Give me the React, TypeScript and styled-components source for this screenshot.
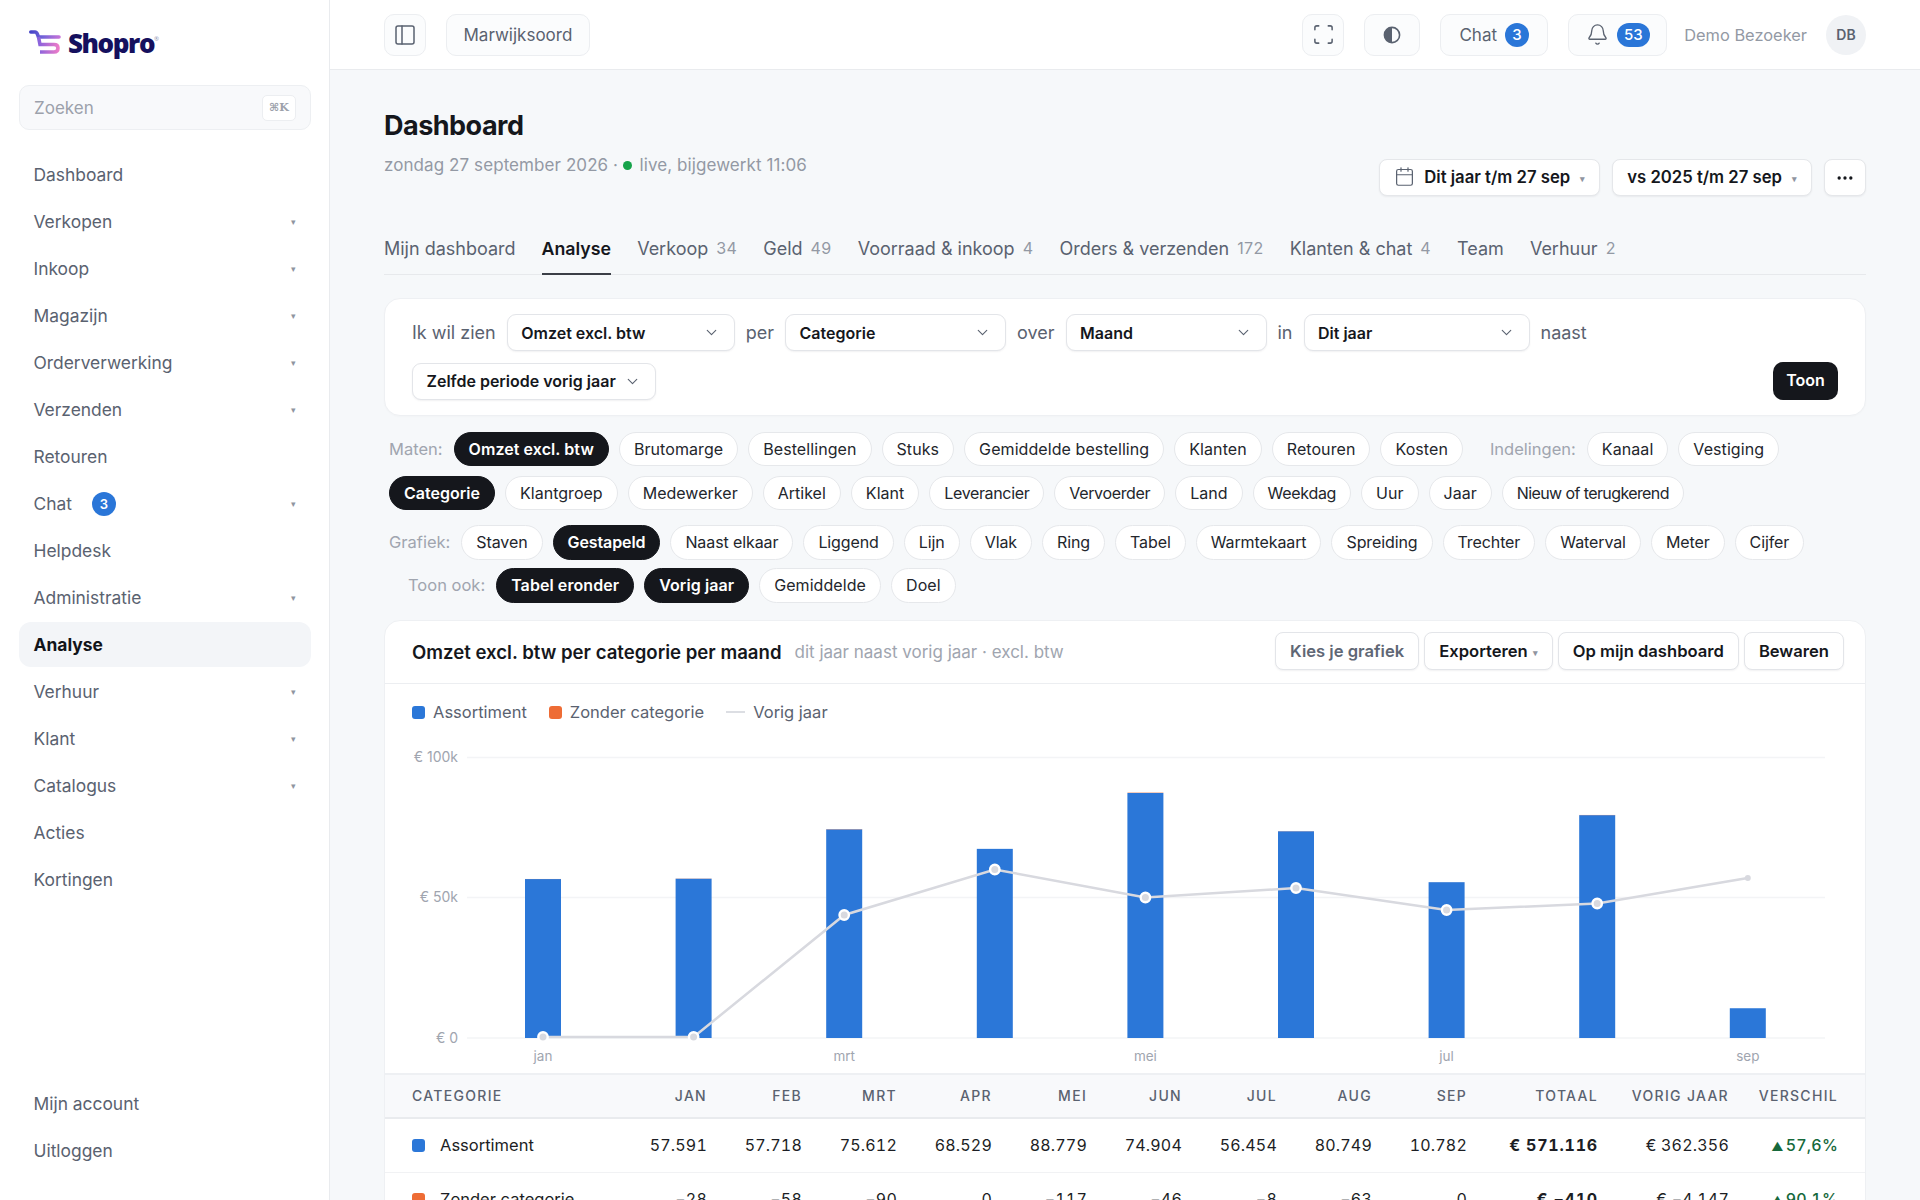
import React from 'react'
import styled, { createGlobalStyle } from 'styled-components'
import { Bell, Calendar, ChevronDown, Ellipsis, PanelLeft, Scan } from 'lucide-react'

const GlobalStyle = createGlobalStyle`
  html, body {
    margin: 0;
    height: 100%;
    overflow: hidden;
    background: #f6f8fa;
    font-family: Inter, "Liberation Sans", sans-serif;
    color: #15171c;
    -webkit-font-smoothing: antialiased;
  }
  * { box-sizing: border-box; }
`

const Shell = styled.div`
  display: flex;
  height: 1200px;
  overflow: hidden;
`

const Sidebar = styled.aside`
  width: 330px;
  flex: none;
  background: #fff;
  border-right: 1px solid #e9ebee;
  padding: 28px 18px 27px 19px;
  display: flex;
  flex-direction: column;
`

const LogoRow = styled.div`
  display: flex;
  align-items: center;
  gap: 7px;
  height: 30px;
  padding-left: 10px;
`

const LogoText = styled.span`
  font-family: "Open Sans", sans-serif;
  font-weight: 800;
  font-size: 26px;
  letter-spacing: -1.4px;
  color: #15105e;
  position: relative;

  &::after {
    content: '®';
    position: absolute;
    font-size: 6px;
    font-weight: 400;
    letter-spacing: 0;
    color: #8d8fb0;
    top: 10px;
    right: -5px;
  }
`

const Search = styled.div`
  margin-top: 27px;
  height: 45px;
  border: 1px solid #edeff2;
  border-radius: 10px;
  background: #f8f9fb;
  display: flex;
  align-items: center;
  justify-content: space-between;
  padding: 0 14px;
  font-size: 17px;
  color: #9ca1ab;
`

const Kbd = styled.span`
  width: 34px;
  height: 26px;
  border: 1px solid #eceef1;
  border-radius: 5px;
  background: #fff;
  display: flex;
  align-items: center;
  justify-content: center;
  font-family: "DejaVu Serif", serif;
  font-weight: 700;
  font-size: 11px;
  color: #9ca1ab;
`

const NavList = styled.nav`
  margin-top: 22.5px;
  display: flex;
  flex-direction: column;
  gap: 2px;
`

const BottomNav = styled(NavList)`
  margin-top: auto;
`

const NavItem = styled.div<{ $active?: boolean }>`
  height: 44.94px;
  padding: 0 15px 0 14.5px;
  border-radius: 12px;
  display: flex;
  align-items: center;
  font-size: 17.4px;
  font-weight: ${(p) => (p.$active ? 700 : 400)};
  color: ${(p) => (p.$active ? '#121419' : '#5a6270')};
  background: ${(p) => (p.$active ? '#f3f5f8' : 'transparent')};
`

const NavCaret = styled.span`
  margin-left: auto;
  font-size: 9px;
  color: #8f95a0;
`

const NavBadge = styled.span`
  width: 24px;
  height: 24px;
  margin-left: 20px;
  border-radius: 50%;
  background: #2a76d8;
  color: #fff;
  font-size: 13px;
  font-weight: 600;
  display: flex;
  align-items: center;
  justify-content: center;
`

const Main = styled.main`
  flex: 1;
  min-width: 0;
  display: flex;
  flex-direction: column;
`

const Topbar = styled.header`
  height: 70px;
  flex: none;
  background: #fff;
  border-bottom: 1px solid #e9ebee;
  padding: 0 54px;
  display: flex;
  align-items: center;
  gap: 20px;
`

const TopButton = styled.div<{ $width?: number }>`
  height: 42px;
  ${(p) => (p.$width ? `width: ${p.$width}px;` : 'padding: 0 16.5px;')}
  border: 1px solid #eceef1;
  border-radius: 10px;
  background: #fbfcfd;
  display: flex;
  align-items: center;
  justify-content: center;
  gap: 8px;
  font-size: 17px;
  color: #5a6270;
`

const TopSpacer = styled.div`
  flex: 1;
`

const CountBadge = styled.span<{ $wide?: boolean }>`
  height: 24px;
  min-width: 24px;
  padding: 0 ${(p) => (p.$wide ? 7 : 0)}px;
  border-radius: 12px;
  background: #2a76d8;
  color: #fff;
  font-size: 15px;
  font-weight: 500;
  display: flex;
  align-items: center;
  justify-content: center;
`

const UserName = styled.span`
  font-size: 16.4px;
  color: #9399a4;
  margin-left: -3px;
`

const Avatar = styled.div`
  width: 40px;
  height: 40px;
  margin-left: -1px;
  border-radius: 50%;
  background: #f0f2f5;
  display: flex;
  align-items: center;
  justify-content: center;
  font-size: 14px;
  font-weight: 600;
  color: #5a6270;
`

const Content = styled.div`
  padding: 38px 54px 0;
  flex: 1;
`

const Heading = styled.div`
  display: flex;
  justify-content: space-between;
  align-items: flex-end;
  height: 88px;
`

const HeadingText = styled.div`
  align-self: flex-start;
`

const Title = styled.h1`
  margin: 0;
  font-size: 27px;
  line-height: 36px;
  font-weight: 700;
  letter-spacing: -0.5px;
  color: #15171c;
`

const Subtitle = styled.div`
  margin-top: 9px;
  font-size: 17px;
  line-height: 24px;
  letter-spacing: 0.08px;
  color: #9399a4;
  display: flex;
  align-items: center;
  gap: 4px;
`

const LiveDot = styled.span`
  width: 9px;
  height: 9px;
  margin: 1px 3.5px 0 1px;
  border-radius: 50%;
  background: #16a34a;
`

const HeadActions = styled.div`
  display: flex;
  gap: 12px;
`

const PeriodButton = styled.div<{ $square?: boolean }>`
  height: 37px;
  padding: ${(p) => (p.$square ? '0' : '0 14px 2px 14px')};
  ${(p) => p.$square && 'width: 42px; justify-content: center;'}
  background: #fff;
  border: 1px solid #e5e7ea;
  border-radius: 8px;
  box-shadow: 0 1px 2px rgba(20, 24, 32, 0.06);
  display: flex;
  align-items: center;
  gap: 9px;
  font-size: 16.7px;
  font-weight: 600;
  color: #15171c;
`

const SmallCaret = styled.span`
  font-size: 9px;
  color: #8f95a0;
  margin: 3px 0 0 1px;
`

const Tabs = styled.div`
  margin-top: 29px;
  height: 50px;
  border-bottom: 1px solid #e7e9ec;
  display: flex;
  gap: 26px;
`

const Tab = styled.div<{ $active?: boolean }>`
  height: 50px;
  display: flex;
  align-items: center;
  gap: 8px;
  padding-bottom: 2px;
  font-size: ${(p) => (p.$active ? 17.8 : 18)}px;
  font-weight: ${(p) => (p.$active ? 600 : 400)};
  color: ${(p) => (p.$active ? '#15171c' : '#5a6270')};
  border-bottom: 2px solid ${(p) => (p.$active ? '#3b3f47' : 'transparent')};
`

const TabCount = styled.span`
  font-size: 16px;
  letter-spacing: 0.4px;
  color: #9399a4;
`

const FilterCard = styled.section`
  margin-top: 23px;
  height: 118px;
  background: #fff;
  border: 1px solid #eef0f3;
  border-radius: 16px;
  box-shadow: 0 1px 2px rgba(20, 24, 32, 0.02);
  padding: 15px 27px 0;
  display: flex;
  flex-direction: column;
  gap: 11px;
`

const FilterRow = styled.div`
  display: flex;
  align-items: center;
  gap: 11px;
`

const Word = styled.span`
  font-size: 18px;
  color: #5a6270;
`

const Select = styled.div<{ $width?: number }>`
  height: 37px;
  ${(p) => p.$width && `width: ${p.$width}px;`}
  padding: 0 14px 0 13.5px;
  background: #fff;
  border: 1px solid #e3e5e9;
  border-radius: 9px;
  box-shadow: 0 1px 2px rgba(20, 24, 32, 0.06);
  display: flex;
  align-items: center;
  justify-content: space-between;
  gap: 8px;
  font-size: 16px;
  font-weight: 600;
  color: #15171c;
  white-space: nowrap;
`

const ShowButton = styled.div`
  margin-left: auto;
  height: 38px;
  width: 65px;
  border-radius: 10px;
  background: #15171c;
  color: #fff;
  display: flex;
  align-items: center;
  justify-content: center;
  font-size: 16px;
  font-weight: 600;
  padding-bottom: 2px;
`

const PillGroup = styled.div<{ $top: number; $gap: number }>`
  margin-top: ${(p) => p.$top}px;
  padding-left: 5px;
  display: flex;
  flex-direction: column;
  gap: ${(p) => p.$gap}px;
`

const PillLine = styled.div<{ $spacing?: number }>`
  display: flex;
  align-items: center;
  gap: 10px;
  letter-spacing: ${(p) => p.$spacing || 0}px;
`

const PillLabel = styled.span<{ $indent?: number }>`
  font-size: 16.5px;
  letter-spacing: 0;
  color: #a0a5af;
  margin-right: 1px;
  margin-left: ${(p) => p.$indent || 0}px;
`

const Pill = styled.span<{ $on?: boolean; $spacing?: number }>`
  height: 34.5px;
  padding: 0 14px;
  border-radius: 18px;
  border: 1px solid ${(p) => (p.$on ? '#15171c' : '#e6e8eb')};
  background: ${(p) => (p.$on ? '#15171c' : '#fff')};
  color: ${(p) => (p.$on ? '#fff' : '#23262c')};
  font-size: 16px;
  font-weight: ${(p) => (p.$on ? 600 : 400)};
  display: flex;
  align-items: center;
  white-space: nowrap;
  ${(p) => p.$spacing !== undefined && `letter-spacing: ${p.$spacing}px;`}
`

const ChartCard = styled.section`
  margin-top: 17.2px;
  background: #fff;
  border: 1px solid #eef0f3;
  border-radius: 16px 16px 0 0;
`

const ChartHead = styled.div`
  height: 63px;
  padding: 1px 21px 0 27px;
  border-bottom: 1px solid #eceef1;
  display: flex;
  align-items: center;
  gap: 13px;
`

const ChartTitle = styled.span`
  font-size: 18.6px;
  font-weight: 600;
  color: #15171c;
`

const ChartNote = styled.span`
  font-size: 17px;
  color: #a0a5af;
`

const ChartActions = styled.div`
  margin-left: auto;
  display: flex;
  gap: 5px;
`

const ActionButton = styled.div<{ $muted?: boolean }>`
  height: 38px;
  padding: 0 14px;
  margin-top: -2px;
  background: #fff;
  border: 1px solid #e3e5e9;
  border-radius: 8px;
  box-shadow: 0 1px 2px rgba(20, 24, 32, 0.06);
  display: flex;
  align-items: center;
  gap: 4px;
  font-size: 16.6px;
  font-weight: 600;
  color: ${(p) => (p.$muted ? '#5f6775' : '#15171c')};
  white-space: nowrap;
`

const Legend = styled.div`
  height: 55px;
  padding: 2px 27px 0;
  display: flex;
  align-items: center;
  gap: 22px;
  font-size: 16.5px;
  color: #5a6270;
`

const LegendItem = styled.span`
  display: flex;
  align-items: center;
  gap: 8px;
`

const Swatch = styled.span<{ $color: string }>`
  width: 13px;
  height: 13px;
  border-radius: 3px;
  background: ${(p) => p.$color};
  flex: none;
`

const LegendLine = styled.span`
  width: 19px;
  height: 2px;
  background: #dcdee3;
`

const ChartSvg = styled.svg`
  display: block;
  width: 1480px;
  height: 334px;
  font-family: Inter, sans-serif;
`

const TableRow = styled.div<{ $head?: boolean }>`
  display: grid;
  grid-template-columns: 200px repeat(9, 95px) 131px 131px 109px;
  padding: 0 27px;
  align-items: center;
  height: ${(p) => (p.$head ? 46 : 54)}px;
  background: ${(p) => (p.$head ? '#f8f9fb' : '#fff')};
  border-top: ${(p) => (p.$head ? '2px solid #eef0f3' : 'none')};
  border-bottom: ${(p) => (p.$head ? '2px solid #e9ebee' : '1px solid #f1f2f4')};
`

const HeadCell = styled.div<{ $left?: boolean }>`
  text-align: ${(p) => (p.$left ? 'left' : 'right')};
  font-size: 14px;
  font-weight: 500;
  letter-spacing: 1.3px;
  color: #5a6270;
  white-space: nowrap;
`

const NameCell = styled.div`
  display: flex;
  align-items: center;
  gap: 15px;
  font-size: 16.5px;
  color: #1c1e24;
`

const NumCell = styled.div<{ $strong?: boolean }>`
  text-align: right;
  font-size: 16px;
  font-weight: ${(p) => (p.$strong ? 700 : 400)};
  letter-spacing: ${(p) => (p.$strong ? 0.8 : 0.2)}px;
  color: #1c1e24;
  font-variant-numeric: tabular-nums;
  white-space: nowrap;
`

const DeltaCell = styled(NumCell)`
  color: #16693c;
  font-weight: 500;
`

const DeltaArrow = styled.span`
  font-size: 12px;
  margin-right: 2px;
`

const navTop = [
  { label: 'Dashboard' },
  { label: 'Verkopen', caret: true },
  { label: 'Inkoop', caret: true },
  { label: 'Magazijn', caret: true },
  { label: 'Orderverwerking', caret: true },
  { label: 'Verzenden', caret: true },
  { label: 'Retouren' },
  { label: 'Chat', caret: true, badge: 3 },
  { label: 'Helpdesk' },
  { label: 'Administratie', caret: true },
  { label: 'Analyse', active: true },
  { label: 'Verhuur', caret: true },
  { label: 'Klant', caret: true },
  { label: 'Catalogus', caret: true },
  { label: 'Acties' },
  { label: 'Kortingen' },
]

const tabs = [
  { label: 'Mijn dashboard' },
  { label: 'Analyse', active: true },
  { label: 'Verkoop', count: 34 },
  { label: 'Geld', count: 49 },
  { label: 'Voorraad & inkoop', count: 4 },
  { label: 'Orders & verzenden', count: 172 },
  { label: 'Klanten & chat', count: 4 },
  { label: 'Team' },
  { label: 'Verhuur', count: 2 },
]

// a few labels run narrower in the reference font
const pillSpacing: Record<string, number> = {
  Leverancier: -0.35,
  Vervoerder: -0.35,
  Weekdag: -0.3,
  'Nieuw of terugkerend': -0.6,
}

const months = ['JAN', 'FEB', 'MRT', 'APR', 'MEI', 'JUN', 'JUL', 'AUG', 'SEP']
const assortiment = [57591, 57718, 75612, 68529, 88779, 74904, 56454, 80749, 10782]
const zonder = [28, 58, 90, 0, 117, 46, 8, 63, 0]
const prevYear = [1037, 1037, 915, 869.5, 897.5, 888, 910, 903.5, 878]
const fmt = (n: number) => n.toLocaleString('de-DE')

// chart coords are page px minus this offset
const OX = 385
const OY = 739
const barX = (i: number) => 543 + i * 150.6 - OX

const PillRow = ({ items, on = [] }: { items: string[]; on?: string[] }) => (
  <>
    {items.map((t) => (
      <Pill key={t} $on={on.includes(t)} $spacing={pillSpacing[t]}>
        {t}
      </Pill>
    ))}
  </>
)

const Chart = () => {
  const line = prevYear.map((y, i) => `${barX(i)},${y - OY}`).join(' ')
  const baseY = 1038 - OY
  return (
    <ChartSvg viewBox="0 0 1480 334">
      {[757.5, 897.5, 1038].map((y) => (
        <line key={y} x1={82} x2={1440} y1={y - OY} y2={y - OY} stroke="#f3f4f6" strokeWidth="1.5" />
      ))}
      {[
        ['€ 100k', 757.5],
        ['€ 50k', 897.5],
        ['€ 0', 1038],
      ].map(([t, y]) => (
        <text key={t} x={73} y={Number(y) - OY + 4.5} textAnchor="end" fontSize="14" fill="#a0a5af">
          {t}
        </text>
      ))}
      {assortiment.map((v, i) => {
        const h = v * 0.00276
        const z = zonder[i] * 0.00276
        return (
          <g key={i}>
            <rect x={barX(i) - 18} y={baseY - h} width={36} height={h} fill="#2b77d8" />
            <rect x={barX(i) - 18} y={baseY - h - z} width={36} height={z} fill="#ee6c35" />
          </g>
        )
      })}
      <polyline points={line} fill="none" stroke="#d8d9df" strokeWidth="2.5" />
      {prevYear.map((y, i) =>
        i === 8 ? (
          <circle key={i} cx={barX(i)} cy={y - OY} r="3" fill="#d8d9df" />
        ) : (
          <circle key={i} cx={barX(i)} cy={y - OY} r="4.7" fill="#d8d9df" stroke="#fff" strokeWidth="2.4" />
        ),
      )}
      {[
        ['jan', 0],
        ['mrt', 2],
        ['mei', 4],
        ['jul', 6],
        ['sep', 8],
      ].map(([t, i]) => (
        <text key={t} x={barX(Number(i))} y={1061 - OY} textAnchor="middle" fontSize="13.5" fill="#a0a5af">
          {t}
        </text>
      ))}
    </ChartSvg>
  )
}

const LogoMark = () => (
  <svg width="32" height="26" viewBox="0 0 32 26" fill="none">
    <defs>
      <linearGradient id="cartTop" x1="0" y1="0" x2="31" y2="8" gradientUnits="userSpaceOnUse">
        <stop offset="0" stopColor="#3f3fc4" />
        <stop offset="0.45" stopColor="#6f62d8" />
        <stop offset="1" stopColor="#c873d8" />
      </linearGradient>
      <linearGradient id="cartBot" x1="10" y1="18" x2="30" y2="18" gradientUnits="userSpaceOnUse">
        <stop offset="0" stopColor="#8a63dc" />
        <stop offset="1" stopColor="#ee7cc8" />
      </linearGradient>
    </defs>
    <path d="M1.8 2H6C7.5 2 8 3 8.5 4.5L9.5 7H30" stroke="url(#cartTop)" strokeWidth="3.6" strokeLinecap="round" fill="none" />
    <path d="M9.5 7L11 14.5H25C28 14.5 29 16 29 18C29 20.5 27.5 22 25 22H11" stroke="url(#cartBot)" strokeWidth="3.6" fill="none" />
  </svg>
)

const ContrastIcon = () => (
  <svg width="20" height="20" viewBox="0 0 20 20">
    <circle cx="10" cy="10" r="7.6" fill="none" stroke="#5a6270" strokeWidth="1.6" />
    <path d="M10 2.4A7.6 7.6 0 0 0 10 17.6Z" fill="#5a6270" />
  </svg>
)

const App = () => {
  const chevron = <ChevronDown size={17} strokeWidth={1.6} color="#5a6270" />
  return (
    <Shell>
      <GlobalStyle />
      <Sidebar>
        <LogoRow>
          <LogoMark />
          <LogoText>Shopro</LogoText>
        </LogoRow>
        <Search>
          Zoeken
          <Kbd>⌘K</Kbd>
        </Search>
        <NavList>
          {navTop.map((n) => (
            <NavItem key={n.label} $active={n.active}>
              {n.label}
              {n.badge && <NavBadge>{n.badge}</NavBadge>}
              {n.caret && <NavCaret>▾</NavCaret>}
            </NavItem>
          ))}
        </NavList>
        <BottomNav>
          <NavItem>Mijn account</NavItem>
          <NavItem>Uitloggen</NavItem>
        </BottomNav>
      </Sidebar>

      <Main>
        <Topbar>
          <TopButton $width={42}>
            <PanelLeft size={24} strokeWidth={1.5} />
          </TopButton>
          <TopButton>Marwijksoord</TopButton>
          <TopSpacer />
          <TopButton $width={42}>
            <Scan size={23} strokeWidth={1.6} />
          </TopButton>
          <TopButton $width={56}>
            <ContrastIcon />
          </TopButton>
          <TopButton $width={108}>
            Chat <CountBadge>3</CountBadge>
          </TopButton>
          <TopButton $width={99}>
            <Bell size={23} strokeWidth={1.4} />
            <CountBadge $wide>53</CountBadge>
          </TopButton>
          <UserName>Demo Bezoeker</UserName>
          <Avatar>DB</Avatar>
        </Topbar>

        <Content>
          <Heading>
            <HeadingText>
              <Title>Dashboard</Title>
              <Subtitle>
                zondag 27 september 2026 · <LiveDot /> live, bijgewerkt 11:06
              </Subtitle>
            </HeadingText>
            <HeadActions>
              <PeriodButton>
                <Calendar size={21} strokeWidth={1.4} color="#5a6270" />
                Dit jaar t/m 27 sep
                <SmallCaret>▾</SmallCaret>
              </PeriodButton>
              <PeriodButton>
                vs 2025 t/m 27 sep
                <SmallCaret>▾</SmallCaret>
              </PeriodButton>
              <PeriodButton $square>
                <Ellipsis size={20} strokeWidth={2} />
              </PeriodButton>
            </HeadActions>
          </Heading>

          <Tabs>
            {tabs.map((t) => (
              <Tab key={t.label} $active={t.active}>
                {t.label}
                {t.count !== undefined && <TabCount>{t.count}</TabCount>}
              </Tab>
            ))}
          </Tabs>

          <FilterCard>
            <FilterRow>
              <Word>Ik wil zien</Word>
              <Select $width={228}>Omzet excl. btw {chevron}</Select>
              <Word>per</Word>
              <Select $width={221}>Categorie {chevron}</Select>
              <Word>over</Word>
              <Select $width={201}>Maand {chevron}</Select>
              <Word>in</Word>
              <Select $width={226}>Dit jaar {chevron}</Select>
              <Word>naast</Word>
            </FilterRow>
            <FilterRow>
              <Select>Zelfde periode vorig jaar {chevron}</Select>
              <ShowButton>Toon</ShowButton>
            </FilterRow>
          </FilterCard>

          <PillGroup $top={15.8} $gap={9.7}>
            <PillLine $spacing={0.08}>
              <PillLabel>Maten:</PillLabel>
              <PillRow
                items={['Omzet excl. btw', 'Brutomarge', 'Bestellingen', 'Stuks', 'Gemiddelde bestelling', 'Klanten', 'Retouren', 'Kosten']}
                on={['Omzet excl. btw']}
              />
              <PillLabel $indent={17}>Indelingen:</PillLabel>
              <PillRow items={['Kanaal', 'Vestiging']} />
            </PillLine>
            <PillLine $spacing={0.02}>
              <PillRow
                items={['Categorie', 'Klantgroep', 'Medewerker', 'Artikel', 'Klant', 'Leverancier', 'Vervoerder', 'Land', 'Weekdag', 'Uur', 'Jaar', 'Nieuw of terugkerend']}
                on={['Categorie']}
              />
            </PillLine>
          </PillGroup>

          <PillGroup $top={14.6} $gap={8.5}>
            <PillLine $spacing={-0.1}>
              <PillLabel>Grafiek:</PillLabel>
              <PillRow
                items={['Staven', 'Gestapeld', 'Naast elkaar', 'Liggend', 'Lijn', 'Vlak', 'Ring', 'Tabel', 'Warmtekaart', 'Spreiding', 'Trechter', 'Waterval', 'Meter', 'Cijfer']}
                on={['Gestapeld']}
              />
            </PillLine>
            <PillLine $spacing={0.08}>
              <PillLabel $indent={19}>Toon ook:</PillLabel>
              <PillRow items={['Tabel eronder', 'Vorig jaar', 'Gemiddelde', 'Doel']} on={['Tabel eronder', 'Vorig jaar']} />
            </PillLine>
          </PillGroup>

          <ChartCard>
            <ChartHead>
              <ChartTitle>Omzet excl. btw per categorie per maand</ChartTitle>
              <ChartNote>dit jaar naast vorig jaar · excl. btw</ChartNote>
              <ChartActions>
                <ActionButton $muted>Kies je grafiek</ActionButton>
                <ActionButton>
                  Exporteren <SmallCaret>▾</SmallCaret>
                </ActionButton>
                <ActionButton>Op mijn dashboard</ActionButton>
                <ActionButton>Bewaren</ActionButton>
              </ChartActions>
            </ChartHead>
            <Legend>
              <LegendItem>
                <Swatch $color="#2b77d8" />
                Assortiment
              </LegendItem>
              <LegendItem>
                <Swatch $color="#ee6c35" />
                Zonder categorie
              </LegendItem>
              <LegendItem>
                <LegendLine />
                Vorig jaar
              </LegendItem>
            </Legend>
            <Chart />
            <TableRow $head>
              <HeadCell $left>CATEGORIE</HeadCell>
              {months.map((m) => (
                <HeadCell key={m}>{m}</HeadCell>
              ))}
              <HeadCell>TOTAAL</HeadCell>
              <HeadCell>VORIG JAAR</HeadCell>
              <HeadCell>VERSCHIL</HeadCell>
            </TableRow>
            <TableRow>
              <NameCell>
                <Swatch $color="#2b77d8" />
                Assortiment
              </NameCell>
              {assortiment.map((v, i) => (
                <NumCell key={i}>{fmt(v)}</NumCell>
              ))}
              <NumCell $strong>€ 571.116</NumCell>
              <NumCell>€ 362.356</NumCell>
              <DeltaCell>
                <DeltaArrow>▲</DeltaArrow>57,6%
              </DeltaCell>
            </TableRow>
            <TableRow>
              <NameCell>
                <Swatch $color="#ee6c35" />
                Zonder categorie
              </NameCell>
              {zonder.map((v, i) => (
                <NumCell key={i}>{v === 0 ? '0' : `−${v}`}</NumCell>
              ))}
              <NumCell $strong>€ −410</NumCell>
              <NumCell>€ −4.147</NumCell>
              <DeltaCell>
                <DeltaArrow>▲</DeltaArrow>90,1%
              </DeltaCell>
            </TableRow>
          </ChartCard>
        </Content>
      </Main>
    </Shell>
  )
}

export default App
